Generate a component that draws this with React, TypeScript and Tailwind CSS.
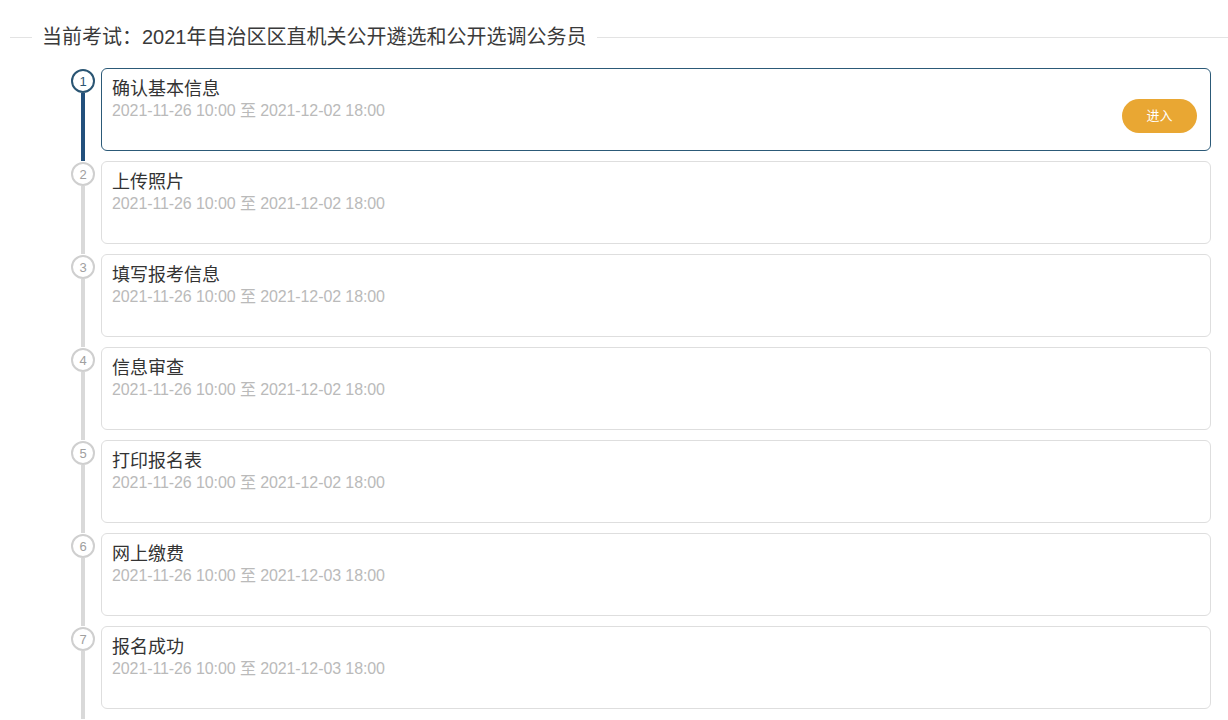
import React from "react";

type Step = {
  title: string;
  start: string;
  end: string;
};

const steps: Step[] = [
  { title: "确认基本信息", start: "2021-11-26 10:00", end: "2021-12-02 18:00" },
  { title: "上传照片", start: "2021-11-26 10:00", end: "2021-12-02 18:00" },
  { title: "填写报考信息", start: "2021-11-26 10:00", end: "2021-12-02 18:00" },
  { title: "信息审查", start: "2021-11-26 10:00", end: "2021-12-02 18:00" },
  { title: "打印报名表", start: "2021-11-26 10:00", end: "2021-12-02 18:00" },
  { title: "网上缴费", start: "2021-11-26 10:00", end: "2021-12-03 18:00" },
  { title: "报名成功", start: "2021-11-26 10:00", end: "2021-12-03 18:00" },
];

const current = 0;

const App = () => {
  return (
    <main
      className="min-h-screen bg-white text-[#333] pt-[25px]"
      style={{ fontFamily: '"Liberation Sans", "Noto Sans CJK SC", sans-serif' }}
    >
      <div className="flex items-center pl-[10px]">
        <div className="w-[22px] h-px bg-[#e3e3e3]" />
        <h1 className="mx-[10px] text-[20px] leading-[24px] text-[#3a3a3a] whitespace-nowrap">
          当前考试：2021年自治区区直机关公开遴选和公开选调公务员
        </h1>
        <div className="flex-1 h-px bg-[#e3e3e3]" />
      </div>

      <div className="flex flex-col pl-[71px] pr-[17px] pt-[19px]">
        {steps.map((step, i) => {
          const active = i === current;
          return (
            <div key={step.title} className="flex">
              <div className="flex flex-col items-center w-[24px] shrink-0 mr-[6px]">
                <div
                  className={`mt-px w-[24px] h-[24px] rounded-full border-2 flex items-center justify-center text-[13px] leading-none bg-white ${
                    active
                      ? "border-[#2a5573] text-[#2a5573]"
                      : "border-[#cfcfcf] text-[#a0a0a0]"
                  }`}
                >
                  {i + 1}
                </div>
                <div
                  className={`w-[4px] flex-1 ${
                    active ? "bg-[#22507c]" : "bg-[#d9d9d9]"
                  } ${i === steps.length - 1 ? "min-h-[20px]" : ""}`}
                />
              </div>
              <div className="flex-1 pb-[10px]">
                <div
                  className={`h-[83px] rounded-[6px] border bg-white flex justify-between items-end pl-[10px] pr-[13px] pb-[17px] ${
                    active ? "border-[#2c5a78]" : "border-[#dedede]"
                  }`}
                >
                  <div className="self-start pt-[9px]">
                    <div className="text-[18px] leading-[22px] text-[#333]">{step.title}</div>
                    <div className="text-[16px] leading-[22px] tracking-[-0.1px] text-[#bababa]">
                      {step.start} 至 {step.end}
                    </div>
                  </div>
                  {active && (
                    <button className="w-[75px] h-[34px] rounded-full bg-[#e9a733] text-white text-[13px]">
                      进入
                    </button>
                  )}
                </div>
              </div>
            </div>
          );
        })}
      </div>
    </main>
  );
};

export default App;
